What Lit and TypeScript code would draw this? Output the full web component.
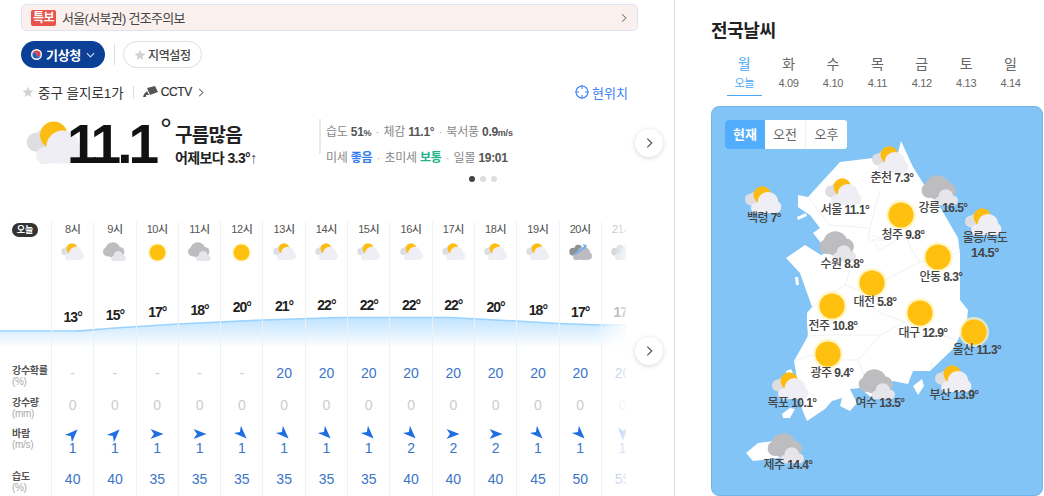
import { LitElement, html, svg, css } from "lit";
import { customElement } from "lit/decorators.js";

type Kind = "sc" | "sun" | "cloud" | "rain";

const scCloud = (fill: string) => svg`<circle cx="23.5" cy="16.5" r="10.5" fill=${fill}/><circle cx="12" cy="22" r="5.5" fill=${fill}/><circle cx="31" cy="21" r="6" fill=${fill}/><rect x="12" y="19" width="19" height="8" fill=${fill}/>`;

const icon = (k: Kind, cls: string) => {
  if (k === "sun")
    return html`<svg class="${cls} sunic" viewBox="0 0 30 30"><circle cx="15" cy="15" r="15" fill="#fff3b8" fill-opacity=".75"/><circle cx="15" cy="15" r="12.6" fill="#ffc00f"/></svg>`;
  if (k === "sc")
    return html`<svg class=${cls} viewBox="0 0 37 28">
      <circle cx="6.5" cy="13.5" r="6" fill="#dedee2"/><circle cx="12" cy="11" r="6" fill="#dedee2"/>
      <circle cx="17.7" cy="9" r="8.7" fill="#fcbc12"/>
      ${scCloud("#eeeef4")}</svg>`;
  if (k === "cloud")
    return html`<svg class=${cls} viewBox="0 0 35 29"><circle cx="15" cy="12" r="11.5" fill="#bdbdc0"/><circle cx="7" cy="15" r="7" fill="#bdbdc0"/><circle cx="25" cy="15" r="7.5" fill="#bdbdc0"/>
      <circle cx="23" cy="20.5" r="6.8" fill="#e5e5ea"/><circle cx="16.5" cy="25" r="4" fill="#e5e5ea"/><circle cx="30" cy="24.5" r="4.5" fill="#e5e5ea"/><rect x="16" y="23" width="15" height="6" fill="#e5e5ea"/></svg>`;
  return html`<svg class=${cls} viewBox="0 0 37 28"><circle cx="7" cy="14" r="6.5" fill="#8f9095"/><circle cx="15" cy="9" r="6" fill="#8f9095"/>
    ${scCloud("#bcbcc0")}
    <path d="M9 18 L27 6" stroke="#6fb0f2" stroke-width="3"/><path d="M22 1.5l7 2-3 6z" fill="#6fb0f2"/></svg>`;
};

const chev = (cls: string) =>
  html`<svg class=${cls} viewBox="0 0 8 12"><path d="M1.5 1l5 5-5 5" fill="none" stroke="currentColor" stroke-width="1.4"/></svg>`;
const star = (cls: string) =>
  html`<svg class=${cls} viewBox="0 0 24 24"><path fill="#d2d2d2" d="M12 1.5l3.2 7 7.6.8-5.7 5.1 1.6 7.5-6.7-3.9-6.7 3.9 1.6-7.5L1.2 9.3l7.6-.8z"/></svg>`;

const hours = [
  { t: "8시", k: "sc", c: 13, p: "-", r: 0, w: 1, a: 45, h: 40, y: 317 },
  { t: "9시", k: "cloud", c: 15, p: "-", r: 0, w: 1, a: 45, h: 40, y: 315 },
  { t: "10시", k: "sun", c: 17, p: "-", r: 0, w: 1, a: 90, h: 35, y: 312 },
  { t: "11시", k: "cloud", c: 18, p: "-", r: 0, w: 1, a: 90, h: 35, y: 310 },
  { t: "12시", k: "sun", c: 20, p: "-", r: 0, w: 1, a: 135, h: 35, y: 307 },
  { t: "13시", k: "sc", c: 21, p: "20", r: 0, w: 1, a: 135, h: 35, y: 306 },
  { t: "14시", k: "sc", c: 22, p: "20", r: 0, w: 1, a: 135, h: 35, y: 305 },
  { t: "15시", k: "sc", c: 22, p: "20", r: 0, w: 1, a: 135, h: 35, y: 305 },
  { t: "16시", k: "sc", c: 22, p: "20", r: 0, w: 2, a: 135, h: 40, y: 305 },
  { t: "17시", k: "sc", c: 22, p: "20", r: 0, w: 2, a: 90, h: 40, y: 305 },
  { t: "18시", k: "sc", c: 20, p: "20", r: 0, w: 2, a: 90, h: 40, y: 307 },
  { t: "19시", k: "sc", c: 18, p: "20", r: 0, w: 1, a: 135, h: 45, y: 310 },
  { t: "20시", k: "rain", c: 17, p: "20", r: 0, w: 1, a: 135, h: 50, y: 312 },
  { t: "21시", k: "rain", c: 17, p: "20", r: 0, w: 1, a: 180, h: 55, y: 312 },
] as const;

const cities: { n: string; v: string; k: Kind; ix: number; iy: number; lx: number; ly: number; v2?: boolean }[] = [
  { n: "춘천", v: "7.3°", k: "sc", ix: 890, iy: 160, lx: 892, ly: 178 },
  { n: "서울", v: "11.1°", k: "sc", ix: 843, iy: 192, lx: 845, ly: 210 },
  { n: "백령", v: "7°", k: "sc", ix: 763, iy: 200, lx: 764, ly: 218 },
  { n: "강릉", v: "16.5°", k: "cloud", ix: 940, iy: 190, lx: 943, ly: 208 },
  { n: "청주", v: "9.8°", k: "sun", ix: 901, iy: 215, lx: 903, ly: 235 },
  { n: "울릉/독도", v: "14.5°", k: "sc", ix: 983, iy: 222, lx: 985, ly: 245, v2: true },
  { n: "수원", v: "8.8°", k: "cloud", ix: 838, iy: 246, lx: 842, ly: 264 },
  { n: "안동", v: "8.3°", k: "sun", ix: 938, iy: 257, lx: 941, ly: 277 },
  { n: "대전", v: "5.8°", k: "sun", ix: 872, iy: 283, lx: 875, ly: 302 },
  { n: "전주", v: "10.8°", k: "sun", ix: 832, iy: 306, lx: 833, ly: 326 },
  { n: "대구", v: "12.9°", k: "sun", ix: 920, iy: 313, lx: 923, ly: 333 },
  { n: "울산", v: "11.3°", k: "sun", ix: 974, iy: 332, lx: 977, ly: 350 },
  { n: "광주", v: "9.4°", k: "sun", ix: 828, iy: 354, lx: 832, ly: 373 },
  { n: "목포", v: "10.1°", k: "sc", ix: 790, iy: 386, lx: 792, ly: 403 },
  { n: "여수", v: "13.5°", k: "cloud", ix: 877, iy: 384, lx: 880, ly: 403 },
  { n: "부산", v: "13.9°", k: "sc", ix: 953, iy: 379, lx: 954, ly: 395 },
  { n: "제주", v: "14.4°", k: "cloud", ix: 786, iy: 448, lx: 788, ly: 465 },
];

const days = [
  ["월", "오늘"], ["화", "4.09"], ["수", "4.10"], ["목", "4.11"],
  ["금", "4.12"], ["토", "4.13"], ["일", "4.14"],
];

const korea =
  "901,141 913,167 923,183 940,207 958,238 960,253 960,300 968,310 967,320 960,336 953,349 930,371 913,371 908,384 893,381 887,388 873,399 860,388 850,389 857,403 850,411 840,406 842,398 832,401 825,409 807,421 802,409 800,396 794,361 808,336 807,323 807,313 812,307 800,273 786,258 805,245 821,255 828,252 813,233 820,228 810,215 798,207 798,195 808,197 840,162 873,158 897,157";

@customElement("app-root")
export class AppRoot extends LitElement {
  static styles = css`
    :host { display: block; width: 1044px; height: 496px; overflow: hidden; background: #fff;
      font-family: "Liberation Sans", "Noto Sans CJK KR", sans-serif; color: #333; }
    .page { display: flex; height: 496px; }
    .left { width: 674px; box-sizing: content-box; border-right: 1px solid #ddd; position: relative; flex: none; }
    .right { flex: 1; padding-left: 36px; }

    .alert { margin: 4px 0 0 21px; width: 617px; height: 27px; box-sizing: border-box; background: #faf1ef;
      border: 1px solid #dfe3f5; border-radius: 5px; display: flex; align-items: center; padding: 0 10px 0 9px; font-size: 13px; color: #444; }
    .badge { background: #e8534a; color: #fff; font-size: 12px; font-weight: 700; width: 25px; height: 16px; line-height: 16px;
      text-align: center; border-radius: 2px; margin-right: 6px; letter-spacing: -0.5px; }
    .alert span.tx { flex: 1; letter-spacing: -0.7px; }
    .chev-a { width: 6px; height: 10px; color: #777; }

    .pills { display: flex; align-items: center; margin: 10px 0 0 21px; height: 27px; }
    .pill-main { width: 84px; height: 27px; border-radius: 14px; background: #0c3f96; color: #fff; font-size: 13px; font-weight: 700;
      display: flex; align-items: center; padding-left: 10px; box-sizing: border-box; gap: 4px; letter-spacing: -0.3px; }
    .tg { width: 11px; height: 11px; }
    .dd { width: 9px; height: 6px; margin-left: 1px; }
    .vsep { width: 1px; height: 21px; background: #ddd; margin: 0 8px 0 9px; }
    .pill-sub { width: 79px; height: 27px; box-sizing: border-box; border: 1px solid #ddd; border-radius: 14px; font-size: 12px; font-weight: 500; color: #444;
      display: flex; align-items: center; padding-left: 10px; gap: 2px; letter-spacing: -0.4px; }
    .st { width: 12px; height: 12px; flex: none; }

    .loc { display: flex; align-items: center; margin: 15px 46px 0 22px; height: 18px; font-size: 13.5px; color: #333; }
    .loc .name { margin-left: 4px; letter-spacing: 0; }
    .loc .sep { width: 1px; height: 13px; background: #ddd; margin: 0 9px; }
    .cam { width: 15px; height: 12px; margin-right: 3px; }
    .cctv { font-size: 12px; font-weight: 500; -webkit-text-stroke: 0.2px #333; letter-spacing: -0.4px; }
    .chev-b { width: 6px; height: 9px; margin-left: 6px; color: #666; }
    .here { margin-left: auto; display: flex; align-items: center; gap: 3px; color: #3b82f6; font-size: 13px; letter-spacing: 0; }
    .tgt { width: 14px; height: 14px; }

    .now { display: flex; margin: 15px 0 0 25px; height: 55px; position: relative; }
    .big-ic { width: 60px; margin-top: 5px; height: 44px; flex: none; }
    .temp { font-size: 55px; font-weight: 700; line-height: 50px; letter-spacing: -4px; color: #111; margin-left: -18px; margin-top: 3px; position: relative; width: 88px; flex: none; height: 50px; }
    .deg { font-size: 30px; font-weight: 400; line-height: 30px; margin-left: 5px; margin-top: -2px; width: 12px; flex: none; color: #222; }
    .summary { margin-left: 3px; margin-top: 8px; width: 144px; flex: none; }
    .summary b { display: block; font-size: 19px; line-height: 24px; color: #222; letter-spacing: -0.7px; }
    .summary i { display: block; font-style: normal; font-weight: 700; font-size: 14px; line-height: 20px; color: #222; letter-spacing: -0.6px; margin-top: 0; }
    .summary i em { font-style: normal; font-weight: 400; color: #555; font-size: 15px; }
    .stats { border-left: 2px solid #e9e9e9; height: 35px; padding-left: 5px; font-size: 12px; color: #888; line-height: 26px; margin-top: 3px; }
    .stats div { height: 26px; white-space: nowrap; letter-spacing: -0.2px; }
    .stats b { color: #555; font-size: 12px; letter-spacing: -0.3px; }
    .stats small { font-size: 9px; font-weight: 700; color: #555; }
    .stats .blue { color: #2f7bef; }
    .stats .green { color: #1fb58a; }
    .stats u { text-decoration: none; color: #bbb; padding: 0 1px; }

    .dots { display: flex; gap: 5px; margin: 5px 0 0 469px; height: 6px; }
    .dots span { width: 6px; height: 6px; border-radius: 50%; background: #ddd; }
    .dots span.on { background: #444; }

    .next { position: absolute; width: 28px; height: 28px; border-radius: 50%; background: #fff; left: 635px; box-shadow: 0 1px 5px rgba(0,0,0,.16);
      display: flex; align-items: center; justify-content: center; color: #555; z-index: 4; }
    .next svg { width: 7px; height: 12px; }
    .n1 { top: 129px; }
    .n2 { top: 337px; }

    .hourly { position: absolute; left: 0; top: 222px; width: 626px; height: 274px; display: flex; overflow: hidden; }
    .chart { position: absolute; left: 0; top: 0; width: 626px; height: 274px; }
    .fade { position: absolute; left: 596px; top: 0; width: 30px; height: 274px; background: linear-gradient(90deg, rgba(255,255,255,0), rgba(255,255,255,.62) 55%, rgba(255,255,255,.85)); z-index: 3; }
    .labels { width: 51px; flex: none; position: relative; }
    .today { margin: 1px 0 0 12px; width: 26px; height: 14px; border-radius: 7px; background: #333; color: #fff; font-size: 9px; font-weight: 700; line-height: 14px; text-align: center; }
    .lab-sp { height: 120px; }
    .lab { padding-left: 12px; box-sizing: border-box; font-size: 10px; line-height: 11px; color: #555; font-weight: 700; letter-spacing: -0.3px; }
    .lab small { display: block; font-size: 10px; font-weight: 400; color: #aaa; letter-spacing: -0.3px; }
    .lh32 { height: 32px; padding-top: 8px; }
    .lh40 { height: 40px; padding-top: 7px; }
    .lh35 { height: 35px; padding-top: 10px; }
    .col { width: 42.3px; flex: none; border-left: 1px solid #eff0f2; box-sizing: border-box; position: relative; text-align: center; }
    .time { height: 14px; line-height: 14px; font-size: 11px; color: #555; font-weight: 500; letter-spacing: -0.4px; white-space: nowrap; }
    .icbox { height: 32px; display: flex; align-items: center; justify-content: center; }
    .ic-s { width: 23px; display: block; }
    .ic-s.sunic { width: 19px; }
    .tz { height: 89px; box-sizing: border-box; font-size: 14px; font-weight: 700; line-height: 14px; color: #222; letter-spacing: -1px; }
    .cell { font-size: 14px; color: #3b74c9; }
    .r32 { height: 32px; line-height: 32px; }
    .gray { color: #ccc; }
    .rw { height: 40px; padding-top: 6px; box-sizing: border-box; line-height: 14px; }
    .rw svg { display: block; width: 14px; height: 14px; margin: 0 auto; }
    .rh { height: 35px; line-height: 36px; }

    .title { font-size: 18px; font-weight: 700; margin-top: 19px; line-height: 24px; color: #222; letter-spacing: -0.4px; }
    .days { display: grid; grid-template-columns: repeat(7, 44.4px); margin: 12px 0 0 11px; text-align: center; height: 45px; }
    .day { font-size: 14px; color: #666; line-height: 18px; }
    .day small { display: block; font-size: 11px; line-height: 20px; color: #666; letter-spacing: -0.3px; }
    .day.on { color: #4aa8f8; }
    .day.on small { color: #4aa8f8; }
    .day.on::after { content: ""; display: block; width: 35px; height: 1px; background: #4aa8f8; margin: 2px auto 0; }
    .map { width: 332px; height: 390px; margin-top: 6px; background: #83c4f7; border: 1px solid #74b5e8; border-radius: 8px; box-sizing: border-box; position: relative; overflow: hidden; }
    .land { position: absolute; left: -1px; top: -1px; width: 332px; height: 390px; }
    .tabs { position: absolute; left: 13px; top: 13px; display: flex; height: 29px; background: #fff; border-radius: 3px; overflow: hidden; font-size: 13px; color: #666; z-index: 1; }
    .tabs span { width: 41px; text-align: center; line-height: 29px; border-right: 1px solid #eef0f3; box-sizing: border-box; }
    .tabs span.on { background: #52aefc; color: #fff; font-weight: 700; border: 0; width: 40px; }
    .tabs span:last-child { border: 0; }
    .pin { position: absolute; transform: translate(-50%, -50%); display: block; }
    .ic-m { width: 37px; display: block; }
    .ic-m.sunic { width: 30px; }
    .lb { position: absolute; transform: translate(-50%, -50%); font-size: 12px; line-height: 14px; color: #444; white-space: nowrap; text-align: center; letter-spacing: -0.55px; font-weight: 500; }
    .lb b { font-weight: 700; color: #444; }
    .lb.two b { display: block; margin-top: 1px; font-size: 13px; }
  `;

  render() {
    const line = "M0 331 L73 331 C85 331 100 329 115 328 L178 324 L263 320 L340 317.5 L450 317.5 C480 319 500 320 516 321 L559 323.5 L600 325 L626 325";
    return html`<div class="page">
      <div class="left">
        <div class="alert"><span class="badge">특보</span><span class="tx">서울(서북권) 건조주의보</span>${chev("chev-a")}</div>
        <div class="pills">
          <div class="pill-main">
            <svg class="tg" viewBox="0 0 12 12"><circle cx="6" cy="6" r="6" fill="#fff"/><path d="M1.5 6a4.5 4.5 0 0 1 9 0 2.25 2.25 0 0 1-4.5 0 2.25 2.25 0 0 0-4.5 0z" fill="#d8434e"/><path d="M1.5 6a4.5 4.5 0 0 0 9 0 2.25 2.25 0 0 1-4.5 0 2.25 2.25 0 0 0-4.5 0z" fill="#2a5fb8"/></svg>
            <span>기상청</span>
            <svg class="dd" viewBox="0 0 10 6"><path d="M1 1l4 4 4-4" fill="none" stroke="#cdd9ee" stroke-width="1.3"/></svg>
          </div>
          <div class="vsep"></div>
          <div class="pill-sub">${star("st")}<span>지역설정</span></div>
        </div>
        <div class="loc">
          ${star("st")}<span class="name">중구 을지로1가</span><span class="sep"></span>
          <svg class="cam" viewBox="0 0 15 12"><path fill="#555" d="M4 2l8-2 3 6-8 3zM1 8l3-3 2 4H3v2H0z"/></svg>
          <span class="cctv">CCTV</span>${chev("chev-b")}
          <span class="here">
            <svg class="tgt" viewBox="0 0 14 14"><circle cx="7" cy="7" r="6" fill="none" stroke="#3b82f6" stroke-width="1.1"/><path d="M7 0v4M7 10v4M0 7h4M10 7h4" stroke="#3b82f6" stroke-width="1.1"/></svg>
            현위치
          </span>
        </div>
        <div class="now">
          ${icon("sc", "big-ic")}
          <div class="temp">11.1</div>
          <div class="deg">°</div>
          <div class="summary"><b>구름많음</b><i>어제보다 3.3°<em>↑</em></i></div>
          <div class="stats">
            <div>습도 <b>51</b><small>%</small> <u>·</u> 체감 <b>11.1°</b> <u>·</u> 북서풍 <b>0.9</b><small>m/s</small></div>
            <div>미세 <b class="blue">좋음</b> <u>·</u> 초미세 <b class="green">보통</b> <u>·</u> 일몰 <b>19:01</b></div>
          </div>
        </div>
        <div class="dots"><span class="on"></span><span></span><span></span></div>
        <div class="next n1">${chev("")}</div>
        <div class="next n2">${chev("")}</div>

        <div class="hourly">
          <svg class="chart" viewBox="0 222 626 274">
            <defs><linearGradient id="ar" x1="0" y1="0" x2="0" y2="1"><stop offset="0" stop-color="#bfe3ff"/><stop offset="1" stop-color="#fff"/></linearGradient></defs>
            <path d="${line} L626 348 L0 348 Z" fill="url(#ar)"/>
            <path d="${line}" fill="none" stroke="#9bd3ff" stroke-width="1.6"/>
          </svg>
          <div class="labels">
            <div class="today">오늘</div>
            <div class="lab-sp"></div>
            <div class="lab lh32">강수확률<small>(%)</small></div>
            <div class="lab lh32">강수량<small>(mm)</small></div>
            <div class="lab lh40">바람<small>(m/s)</small></div>
            <div class="lab lh35">습도<small>(%)</small></div>
          </div>
          ${hours.map(
            (h) => html`<div class="col">
              <div class="time">${h.t}</div>
              <div class="icbox">${icon(h.k as Kind, "ic-s")}</div>
              <div class="tz" style="padding-top:${h.y - 275}px">${h.c}°</div>
              <div class="cell r32 ${h.p === "-" ? "gray" : ""}">${h.p}</div>
              <div class="cell r32 gray">${h.r}</div>
              <div class="cell rw">
                <svg viewBox="0 0 14 14" style="transform:rotate(${h.a}deg)"><path d="M7 0.5L12 13.5 7 10 2 13.5z" fill="#1f6fe0"/></svg>
                ${h.w}
              </div>
              <div class="cell rh">${h.h}</div>
            </div>`
          )}
          <div class="fade"></div>
        </div>
      </div>

      <div class="right">
        <div class="title">전국날씨</div>
        <div class="days">
          ${days.map(([d, s], i) => html`<div class="day ${i === 0 ? "on" : ""}">${d}<small>${s}</small></div>`)}
        </div>
        <div class="map">
          <svg class="land" viewBox="711 106 332 390">
            <polygon points="${korea}" fill="#fff"/>
            <polygon points="797,217 806,213 807,216 798,220" fill="#fff"/>
            <polygon points="795,277 798,277 799,285 796,285" fill="#fff"/>
            <polygon points="913,386 922,379 924,386 918,395" fill="#fff"/>
            <polygon points="782,414 790,408 795,409 790,418 783,418" fill="#fff"/>
            <polygon points="786,371 791,369 793,373 787,374" fill="#fff"/>
            <polygon points="746,453 758,443 783,440 793,456 753,461" fill="#fff"/>
            <path fill="none" stroke="#eef1f4" stroke-width="1" d="M808 197L830 225 870 228 868 240 885 240 872 235 M870 228L880 190 M872 240L880 250 905 235 912 250 920 262 905 270 885 280 M850 270L845 285 860 290 875 310 M812 307L845 285 M807 336L830 335 880 335 905 322 915 338 930 330 955 340 M880 335L858 360 865 378 M794 361L812 355 835 360 858 360 M905 322L885 315 875 310 M930 371L932 362 M920 262L960 252"/>
          </svg>
          <div class="tabs"><span class="on">현재</span><span>오전</span><span>오후</span></div>
          ${cities.map(
            (c) => html`
              <div class="pin" style="left:${c.ix - 712}px;top:${c.iy - 107}px">${icon(c.k, "ic-m")}</div>
              <div class="lb ${c.v2 ? "two" : ""}" style="left:${c.lx - 712}px;top:${c.ly - 107}px">${c.n} <b>${c.v}</b></div>
            `
          )}
        </div>
      </div>
    </div>`;
  }
}
